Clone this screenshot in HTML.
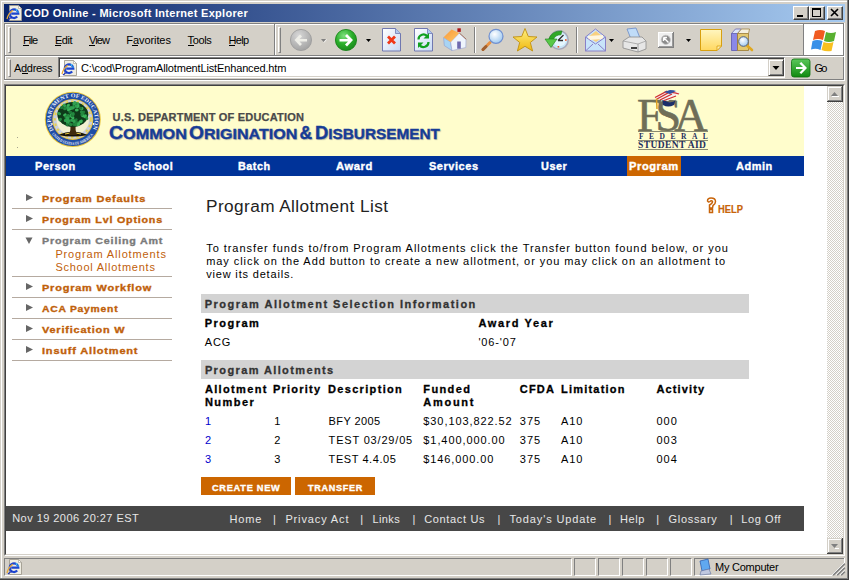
<!DOCTYPE html>
<html><head><meta charset="utf-8">
<style>
*{margin:0;padding:0;box-sizing:border-box}
html,body{width:849px;height:580px;overflow:hidden}
body{position:relative;background:#D4D0C8;font-family:"Liberation Sans",sans-serif;color:#000}
.a{position:absolute}
.t{position:absolute;white-space:nowrap;line-height:1}
.ui{font-size:11px}
.vb{font-weight:bold}
</style></head><body>
<!-- window frame -->
<div class="a" style="left:1px;top:1px;width:846px;height:1px;background:#fff"></div>
<div class="a" style="left:1px;top:1px;width:1px;height:577px;background:#fff"></div>
<div class="a" style="left:847px;top:0;width:1px;height:579px;background:#808080"></div>
<div class="a" style="left:848px;top:0;width:1px;height:580px;background:#404040"></div>
<div class="a" style="left:0;top:578px;width:848px;height:1px;background:#808080"></div>
<div class="a" style="left:0;top:579px;width:849px;height:1px;background:#404040"></div>

<!-- title bar -->
<div class="a" style="left:4px;top:4px;width:841px;height:18px;background:linear-gradient(to right,#0A246A,#A6CAF0)"></div>
<svg class="a" style="left:6px;top:5px" width="16" height="16" viewBox="0 0 16 16">
 <defs><symbol id="ie" viewBox="0 0 16 16">
 <path d="M3.5 0.5 H12.5 L15.5 3.5 V15.5 H3.5z" fill="#EFEDE3" stroke="#A09C90" stroke-width="0.9"/>
 <path d="M12.5 0.5 V3.5 H15.5z" fill="#FFFFFF" stroke="#A09C90" stroke-width="0.6"/>
 <path d="M5.2 8.6 H12.3 A4.3 4.3 0 1 0 11.2 11.6" fill="none" stroke="#1D44CF" stroke-width="2.2"/>
 <path d="M1 14 Q2.2 8.5 6.8 5.2" fill="none" stroke="#E8A838" stroke-width="1.3"/>
 <path d="M2 15 Q4 13 6 12.5" fill="none" stroke="#2030B0" stroke-width="1.2"/>
 <circle cx="10.5" cy="5" r="0.9" fill="#40C8F8"/><circle cx="12" cy="7" r="0.8" fill="#40C8F8"/>
 </symbol></defs>
 <use href="#ie"/>
</svg>
<!-- caption buttons -->
<!--TITLE-->
<div class="a" style="left:793px;top:6px;width:16px;height:14px;background:#D4D0C8;border-top:1px solid #fff;border-left:1px solid #fff;border-right:1px solid #404040;border-bottom:1px solid #404040;box-shadow:inset -1px -1px 0 #808080"></div>
<div class="a" style="left:797px;top:15px;width:6px;height:2px;background:#000"></div>
<div class="a" style="left:809px;top:6px;width:16px;height:14px;background:#D4D0C8;border-top:1px solid #fff;border-left:1px solid #fff;border-right:1px solid #404040;border-bottom:1px solid #404040;box-shadow:inset -1px -1px 0 #808080"></div>
<div class="a" style="left:812px;top:8px;width:9px;height:9px;border:1px solid #000;border-top-width:2px"></div>
<div class="a" style="left:827px;top:6px;width:16px;height:14px;background:#D4D0C8;border-top:1px solid #fff;border-left:1px solid #fff;border-right:1px solid #404040;border-bottom:1px solid #404040;box-shadow:inset -1px -1px 0 #808080"></div>
<svg class="a" style="left:827px;top:6px" width="16" height="14" viewBox="0 0 16 14"><path d="M4 3l7 7M11 3l-7 7" stroke="#000" stroke-width="1.6"/></svg>

<!-- rebar etched lines -->
<div class="a" style="left:4px;top:23px;width:840px;height:1px;background:#808080"></div>
<div class="a" style="left:5px;top:24px;width:839px;height:1px;background:#fff"></div>
<div class="a" style="left:4px;top:23px;width:1px;height:57px;background:#808080"></div>
<div class="a" style="left:5px;top:24px;width:1px;height:56px;background:#fff"></div>
<div class="a" style="left:843px;top:23px;width:1px;height:57px;background:#808080"></div>
<div class="a" style="left:844px;top:23px;width:1px;height:58px;background:#fff"></div>
<div class="a" style="left:4px;top:55px;width:840px;height:1px;background:#808080"></div>
<div class="a" style="left:5px;top:56px;width:839px;height:1px;background:#fff"></div>
<div class="a" style="left:4px;top:79px;width:840px;height:1px;background:#808080"></div>
<div class="a" style="left:4px;top:80px;width:841px;height:1px;background:#fff"></div>
<!-- band separator -->
<div class="a" style="left:274px;top:24px;width:1px;height:31px;background:#808080"></div>
<div class="a" style="left:275px;top:24px;width:1px;height:31px;background:#fff"></div>
<!-- grippers -->
<div class="a" style="left:8px;top:27px;width:3px;height:26px;border-left:1px solid #fff;border-top:1px solid #fff;border-right:1px solid #808080;border-bottom:1px solid #808080"></div>
<div class="a" style="left:278px;top:27px;width:3px;height:26px;border-left:1px solid #fff;border-top:1px solid #fff;border-right:1px solid #808080;border-bottom:1px solid #808080"></div>
<div class="a" style="left:8px;top:59px;width:3px;height:18px;border-left:1px solid #fff;border-top:1px solid #fff;border-right:1px solid #808080;border-bottom:1px solid #808080"></div>

<!-- menu -->
<div class="a" style="left:23px;top:45px;width:6px;height:1px;background:#000"></div>
<div class="a" style="left:55px;top:45px;width:6px;height:1px;background:#000"></div>
<div class="a" style="left:89px;top:45px;width:6px;height:1px;background:#000"></div>
<div class="a" style="left:132px;top:45px;width:6px;height:1px;background:#000"></div>
<div class="a" style="left:188px;top:45px;width:6px;height:1px;background:#000"></div>
<div class="a" style="left:229px;top:45px;width:6px;height:1px;background:#000"></div>
<div class="a" style="left:22px;top:73px;width:6px;height:1px;background:#000"></div>


<!-- throbber -->
<div class="a" style="left:804px;top:24px;width:39px;height:31px;background:#fff"></div>
<div class="a" style="left:803px;top:24px;width:1px;height:31px;background:#808080"></div>

<!-- address bar -->
<div class="a" style="left:58px;top:57px;width:727px;height:21px;background:#fff;border-top:1px solid #808080;border-left:1px solid #808080;border-right:1px solid #fff;border-bottom:1px solid #fff;box-shadow:inset 1px 1px 0 #404040,inset -1px -1px 0 #D4D0C8"></div>
<div class="a" style="left:768px;top:59px;width:16px;height:17px;background:#D4D0C8;border-top:1px solid #D4D0C8;border-left:1px solid #D4D0C8;border-right:1px solid #404040;border-bottom:1px solid #404040;box-shadow:inset 1px 1px 0 #fff,inset -1px -1px 0 #808080"></div>
<svg class="a" style="left:768px;top:59px" width="16" height="17"><path d="M4.5 7h7l-3.5 4z" fill="#000"/></svg>

<!-- content border -->
<div class="a" style="left:4px;top:84px;width:841px;height:472px;border-top:1px solid #808080;border-left:1px solid #808080;border-right:1px solid #fff;border-bottom:1px solid #fff"></div>
<div class="a" style="left:5px;top:85px;width:839px;height:470px;border-top:1px solid #404040;border-left:1px solid #404040;border-right:1px solid #D4D0C8;border-bottom:1px solid #D4D0C8;background:#fff"></div>

<!-- page content placeholder -->
<!-- yellow header -->
<div class="a" style="left:6px;top:86px;width:798px;height:70px;background:#FFFDCC"></div>
<!-- nav bar -->
<div class="a" style="left:6px;top:156px;width:798px;height:20px;background:#003399"></div>
<div class="a" style="left:627px;top:156px;width:54px;height:20px;background:#CC6600"></div>
<!-- left nav lines -->
<div class="a" style="left:12px;top:208px;width:160px;height:1px;background:#b5aaa0"></div>
<div class="a" style="left:12px;top:229px;width:160px;height:1px;background:#b5aaa0"></div>
<div class="a" style="left:12px;top:276px;width:160px;height:1px;background:#b5aaa0"></div>
<div class="a" style="left:12px;top:297px;width:160px;height:1px;background:#b5aaa0"></div>
<div class="a" style="left:12px;top:318px;width:160px;height:1px;background:#b5aaa0"></div>
<div class="a" style="left:12px;top:339px;width:160px;height:1px;background:#b5aaa0"></div>
<div class="a" style="left:12px;top:360px;width:160px;height:1px;background:#b5aaa0"></div>
<!-- arrows -->
<svg class="a" style="left:25px;top:194px" width="9" height="9"><path d="M1 0L8 3.5L1 7z" fill="#666"/></svg>
<svg class="a" style="left:25px;top:215px" width="9" height="9"><path d="M1 0L8 3.5L1 7z" fill="#666"/></svg>
<svg class="a" style="left:25px;top:237px" width="9" height="9"><path d="M0.5 0.5L7.5 0.5L4 7z" fill="#666"/></svg>
<svg class="a" style="left:25px;top:283px" width="9" height="9"><path d="M1 0L8 3.5L1 7z" fill="#666"/></svg>
<svg class="a" style="left:25px;top:304px" width="9" height="9"><path d="M1 0L8 3.5L1 7z" fill="#666"/></svg>
<svg class="a" style="left:25px;top:325px" width="9" height="9"><path d="M1 0L8 3.5L1 7z" fill="#666"/></svg>
<svg class="a" style="left:25px;top:346px" width="9" height="9"><path d="M1 0L8 3.5L1 7z" fill="#666"/></svg>
<!-- bands -->
<div class="a" style="left:201px;top:294px;width:548px;height:19px;background:#D3D3D3"></div>
<div class="a" style="left:201px;top:360px;width:548px;height:19px;background:#D3D3D3"></div>
<!-- buttons -->
<div class="a" style="left:201px;top:477px;width:90px;height:18px;background:#CC6600"></div>
<div class="a" style="left:295px;top:477px;width:80px;height:18px;background:#CC6600"></div>
<!-- footer -->
<div class="a" style="left:6px;top:506px;width:798px;height:25px;background:#474747"></div>
<div class="a" style="left:17px;top:137px;width:1px;height:1px;background:#A8A490"></div>
<div class="a" style="left:17px;top:147px;width:1px;height:1px;background:#A8A490"></div>

<!-- seal -->
<svg class="a" style="left:44px;top:91px" width="58" height="57" viewBox="0 0 58 57">
 <defs>
  <path id="arcT" d="M9.75 39.4A22 22 0 1 1 47.85 39.4"/>
  <path id="arcB" d="M7.9 43A25.5 25.5 0 0 0 49.7 43"/>
 </defs>
 <ellipse cx="28.8" cy="28.4" rx="28" ry="27.6" fill="#E6C23A"/>
 <ellipse cx="28.8" cy="28.4" rx="27" ry="26.6" fill="#1F4DA6"/>
 <text font-family="Liberation Serif" font-size="5.6" font-weight="bold" fill="#E8ECF8"><textPath href="#arcT" textLength="90" lengthAdjust="spacingAndGlyphs">DEPARTMENT OF EDUCATION</textPath></text>
 <text font-family="Liberation Serif" font-size="4.2" font-weight="bold" fill="#E8ECF8"><textPath href="#arcB" textLength="48" lengthAdjust="spacingAndGlyphs">UNITED STATES OF AMERICA</textPath></text>
 <circle cx="8" cy="33" r="0.9" fill="#fff"/><circle cx="49.6" cy="33" r="0.9" fill="#fff"/>
 <circle cx="28.8" cy="28.4" r="20.5" fill="#E6C23A"/>
 <circle cx="28.8" cy="28.4" r="19.6" fill="#C9CFDF"/>
 <circle cx="28.8" cy="28.4" r="18" fill="none" stroke="#E8D050" stroke-width="2" stroke-dasharray="2.5 3"/>
 <circle cx="28.8" cy="28.4" r="16.2" fill="#F3F0D2"/>
 <path d="M14 44 Q29 37 44 44 Q29 47 14 44z" fill="#161208"/>
 <path d="M21 43 Q29 40 37 43" stroke="#E8C840" stroke-width="1" fill="none"/>
 <path d="M25 44 Q27 38 26.5 34 Q24 30 19 29 L21 27.5 Q26 29 28.5 32 Q31 28 36 27 L37 28.5 Q32 30 31.5 34 Q31 39 33 44z" fill="#3E2A0E"/>
 <ellipse cx="28.8" cy="23.5" rx="15.5" ry="12.5" fill="#0E3A1A"/>
 <ellipse cx="20.9" cy="24.0" rx="1.9" ry="1.5" fill="#3AB25A" transform="rotate(154 20.9 24.0)"/><ellipse cx="28.0" cy="24.9" rx="1.9" ry="1.5" fill="#2FA050" transform="rotate(120 28.0 24.9)"/><ellipse cx="21.6" cy="16.9" rx="1.9" ry="1.5" fill="#1E7A38" transform="rotate(138 21.6 16.9)"/><ellipse cx="38.9" cy="22.5" rx="1.9" ry="1.5" fill="#23893F" transform="rotate(59 38.9 22.5)"/><ellipse cx="32.8" cy="31.5" rx="1.9" ry="1.5" fill="#1E7A38" transform="rotate(3 32.8 31.5)"/><ellipse cx="33.9" cy="13.0" rx="1.9" ry="1.5" fill="#2FA050" transform="rotate(77 33.9 13.0)"/><ellipse cx="37.2" cy="30.4" rx="1.9" ry="1.5" fill="#3AB25A" transform="rotate(121 37.2 30.4)"/><ellipse cx="31.6" cy="32.7" rx="1.9" ry="1.5" fill="#1E7A38" transform="rotate(109 31.6 32.7)"/><ellipse cx="25.6" cy="29.9" rx="1.9" ry="1.5" fill="#1E7A38" transform="rotate(34 25.6 29.9)"/><ellipse cx="17.9" cy="16.5" rx="1.9" ry="1.5" fill="#1E7A38" transform="rotate(160 17.9 16.5)"/><ellipse cx="39.5" cy="21.2" rx="1.9" ry="1.5" fill="#1E7A38" transform="rotate(146 39.5 21.2)"/><ellipse cx="24.3" cy="25.0" rx="1.9" ry="1.5" fill="#23893F" transform="rotate(86 24.3 25.0)"/><ellipse cx="34.3" cy="32.9" rx="1.9" ry="1.5" fill="#3AB25A" transform="rotate(155 34.3 32.9)"/><ellipse cx="33.9" cy="15.3" rx="1.9" ry="1.5" fill="#3AB25A" transform="rotate(138 33.9 15.3)"/><ellipse cx="40.9" cy="24.6" rx="1.9" ry="1.5" fill="#23893F" transform="rotate(162 40.9 24.6)"/><ellipse cx="38.7" cy="24.7" rx="1.9" ry="1.5" fill="#3AB25A" transform="rotate(31 38.7 24.7)"/><ellipse cx="37.8" cy="20.9" rx="1.9" ry="1.5" fill="#23893F" transform="rotate(5 37.8 20.9)"/><ellipse cx="22.6" cy="29.2" rx="1.9" ry="1.5" fill="#2FA050" transform="rotate(11 22.6 29.2)"/><ellipse cx="31.9" cy="29.0" rx="1.9" ry="1.5" fill="#1E7A38" transform="rotate(150 31.9 29.0)"/><ellipse cx="23.7" cy="31.8" rx="1.9" ry="1.5" fill="#3AB25A" transform="rotate(129 23.7 31.8)"/><ellipse cx="29.9" cy="33.3" rx="1.9" ry="1.5" fill="#1E7A38" transform="rotate(74 29.9 33.3)"/><ellipse cx="32.1" cy="15.1" rx="1.9" ry="1.5" fill="#2FA050" transform="rotate(86 32.1 15.1)"/><ellipse cx="23.2" cy="33.5" rx="1.9" ry="1.5" fill="#1E7A38" transform="rotate(96 23.2 33.5)"/><ellipse cx="27.6" cy="23.5" rx="1.9" ry="1.5" fill="#2FA050" transform="rotate(158 27.6 23.5)"/><ellipse cx="21.9" cy="26.1" rx="1.9" ry="1.5" fill="#23893F" transform="rotate(77 21.9 26.1)"/><ellipse cx="26.9" cy="17.4" rx="1.9" ry="1.5" fill="#3AB25A" transform="rotate(140 26.9 17.4)"/><ellipse cx="24.0" cy="29.6" rx="1.9" ry="1.5" fill="#3AB25A" transform="rotate(5 24.0 29.6)"/><ellipse cx="25.1" cy="25.1" rx="1.9" ry="1.5" fill="#23893F" transform="rotate(15 25.1 25.1)"/><ellipse cx="32.8" cy="19.1" rx="1.9" ry="1.5" fill="#3AB25A" transform="rotate(173 32.8 19.1)"/><ellipse cx="41.3" cy="25.5" rx="1.9" ry="1.5" fill="#3AB25A" transform="rotate(125 41.3 25.5)"/><ellipse cx="34.1" cy="33.7" rx="1.9" ry="1.5" fill="#3AB25A" transform="rotate(160 34.1 33.7)"/><ellipse cx="27.5" cy="25.1" rx="1.9" ry="1.5" fill="#3AB25A" transform="rotate(45 27.5 25.1)"/><ellipse cx="24.7" cy="18.7" rx="1.9" ry="1.5" fill="#3AB25A" transform="rotate(152 24.7 18.7)"/><ellipse cx="21.7" cy="29.6" rx="1.9" ry="1.5" fill="#2FA050" transform="rotate(6 21.7 29.6)"/><ellipse cx="42.9" cy="27.2" rx="1.9" ry="1.5" fill="#23893F" transform="rotate(79 42.9 27.2)"/><ellipse cx="28.8" cy="26.5" rx="1.9" ry="1.5" fill="#3AB25A" transform="rotate(61 28.8 26.5)"/><ellipse cx="23.6" cy="27.1" rx="1.9" ry="1.5" fill="#2FA050" transform="rotate(26 23.6 27.1)"/><ellipse cx="31.8" cy="33.3" rx="1.9" ry="1.5" fill="#23893F" transform="rotate(112 31.8 33.3)"/><ellipse cx="16.2" cy="28.6" rx="1.9" ry="1.5" fill="#23893F" transform="rotate(145 16.2 28.6)"/><ellipse cx="27.3" cy="16.7" rx="1.9" ry="1.5" fill="#2FA050" transform="rotate(8 27.3 16.7)"/><ellipse cx="29.7" cy="15.9" rx="1.9" ry="1.5" fill="#23893F" transform="rotate(71 29.7 15.9)"/><ellipse cx="24.0" cy="30.5" rx="1.9" ry="1.5" fill="#2FA050" transform="rotate(158 24.0 30.5)"/><ellipse cx="24.2" cy="14.5" rx="1.9" ry="1.5" fill="#3AB25A" transform="rotate(132 24.2 14.5)"/><ellipse cx="37.6" cy="17.7" rx="1.9" ry="1.5" fill="#3AB25A" transform="rotate(162 37.6 17.7)"/><ellipse cx="26.3" cy="21.2" rx="1.9" ry="1.5" fill="#1E7A38" transform="rotate(9 26.3 21.2)"/><ellipse cx="26.8" cy="33.4" rx="1.9" ry="1.5" fill="#23893F" transform="rotate(8 26.8 33.4)"/><ellipse cx="36.2" cy="30.7" rx="1.9" ry="1.5" fill="#3AB25A" transform="rotate(139 36.2 30.7)"/><ellipse cx="24.0" cy="16.7" rx="1.9" ry="1.5" fill="#2FA050" transform="rotate(150 24.0 16.7)"/><ellipse cx="37.9" cy="23.3" rx="1.9" ry="1.5" fill="#23893F" transform="rotate(110 37.9 23.3)"/><ellipse cx="31.1" cy="11.8" rx="1.9" ry="1.5" fill="#2FA050" transform="rotate(43 31.1 11.8)"/><ellipse cx="28.9" cy="17.0" rx="1.9" ry="1.5" fill="#2FA050" transform="rotate(134 28.9 17.0)"/><ellipse cx="29.9" cy="12.7" rx="1.9" ry="1.5" fill="#2FA050" transform="rotate(87 29.9 12.7)"/><ellipse cx="30.0" cy="30.2" rx="1.9" ry="1.5" fill="#2FA050" transform="rotate(90 30.0 30.2)"/><ellipse cx="20.4" cy="14.3" rx="1.9" ry="1.5" fill="#2FA050" transform="rotate(43 20.4 14.3)"/><ellipse cx="21.0" cy="17.8" rx="1.9" ry="1.5" fill="#23893F" transform="rotate(1 21.0 17.8)"/><ellipse cx="28.4" cy="24.6" rx="1.9" ry="1.5" fill="#1E7A38" transform="rotate(12 28.4 24.6)"/><ellipse cx="36.5" cy="17.2" rx="1.9" ry="1.5" fill="#1E7A38" transform="rotate(13 36.5 17.2)"/><ellipse cx="28.0" cy="29.4" rx="1.9" ry="1.5" fill="#2FA050" transform="rotate(14 28.0 29.4)"/><ellipse cx="15.3" cy="22.6" rx="1.9" ry="1.5" fill="#2FA050" transform="rotate(22 15.3 22.6)"/><ellipse cx="29.3" cy="22.8" rx="1.9" ry="1.5" fill="#23893F" transform="rotate(80 29.3 22.8)"/>
</svg>
<!-- COD heading -->
<div class="t" style="left:108.5px;top:125px;font-weight:700;color:#173C96;-webkit-text-stroke:0.35px #173C96;text-shadow:1px 1px 1px rgba(40,40,90,.35);transform:scaleX(1.11);transform-origin:0 0"><span style="font-size:17.5px">C</span><span style="font-size:14.6px">OMMON</span></div>
<div class="t" style="left:189px;top:125px;font-weight:700;color:#173C96;-webkit-text-stroke:0.35px #173C96;text-shadow:1px 1px 1px rgba(40,40,90,.35);transform:scaleX(1.10);transform-origin:0 0"><span style="font-size:17.5px">O</span><span style="font-size:14.6px">RIGINATION</span></div>
<div class="t" style="left:299.5px;top:125px;font-weight:700;color:#173C96;-webkit-text-stroke:0.35px #173C96;text-shadow:1px 1px 1px rgba(40,40,90,.35);transform:scaleX(1.0);transform-origin:0 0"><span style="font-size:17.5px">&amp;</span><span style="font-size:14.6px"></span></div>
<div class="t" style="left:314.5px;top:125px;font-weight:700;color:#173C96;-webkit-text-stroke:0.35px #173C96;text-shadow:1px 1px 1px rgba(40,40,90,.35);transform:scaleX(1.051);transform-origin:0 0"><span style="font-size:17.5px">D</span><span style="font-size:14.6px">ISBURSEMENT</span></div>
<!-- FSA logo -->
<div class="t" style="left:637px;top:93px;font-family:'Liberation Serif',serif;font-size:46px;color:#6F6E58;letter-spacing:-7px;-webkit-text-stroke:0.6px #6F6E58;line-height:1">FSA</div>
<div class="a" style="left:638px;top:131px;width:70px;height:1px;background:#8A8A70"></div>
<div class="t" style="left:639px;top:133px;font-family:'Liberation Serif',serif;font-size:7.5px;font-weight:700;color:#1F2F5E;letter-spacing:5.5px">FEDERAL</div>
<div class="a" style="left:638px;top:140px;width:70px;height:1px;background:#8A8A70"></div>
<div class="t" style="left:638px;top:141px;font-family:'Liberation Serif',serif;font-size:9.5px;font-weight:700;color:#1F2F5E;letter-spacing:0.4px">STUDENT AID</div>
<div class="a" style="left:638px;top:149px;width:70px;height:1px;background:#8A8A70"></div>
<svg class="a" style="left:652px;top:89px" width="30" height="24" viewBox="0 0 30 24">
 <path d="M10 9 Q14 14 20 13 Q24 12 24 9 L22 16 Q16 19 11 16z" fill="#1B2F6A"/>
 <path d="M2 9 L14 2 Q20 0 28 4 L16 12 Q8 11 2 9z" fill="#F4F0F0"/>
 <path d="M3 8.5 L15 2.2 M5 10 L17 3.5 Q22 3 27 5 M8 11 L20 5 M12 11.5 L24 7" stroke="#D23030" stroke-width="1.3" fill="none"/>
 <path d="M12 3 L18 1 Q22 1 24 2 L18 5z" fill="#2E4FA0"/>
 <path d="M4.5 9.5 L5 20" stroke="#E0A020" stroke-width="1.5"/>
</svg>
<!-- HELP -->
<svg class="a" style="left:706px;top:197px" width="11" height="17" viewBox="0 0 11 17">
 <path d="M1.5 4 Q1.5 1 5 1 Q9.5 1 9.5 4.5 Q9.5 7 7 8.5 L6.5 11 L3.5 11 L3.5 8 Q6.5 6.5 6.5 4.5 Q6 3.5 4.5 4 Q4 5 2.5 5z M3.5 12.5 H6.5 V15.5 H3.5z" fill="none" stroke="#C8640A" stroke-width="1.5"/>
</svg>
<div class="t" style="left:718px;top:204px;font-size:11px;font-weight:700;color:#C8640A;letter-spacing:0px;-webkit-text-stroke:0.2px;transform:scaleX(0.85);transform-origin:0 0">HELP</div>


<!-- scrollbar -->
<div class="a" style="left:827px;top:86px;width:16px;height:468px;background-color:#fff;background-image:conic-gradient(#D4D0C8 25%,#fff 0 50%,#D4D0C8 0 75%,#fff 0);background-size:2px 2px"></div>

<!-- status bar -->
<svg class="a" style="left:0;top:0" width="849" height="580" viewBox="0 0 849 580">
 <defs>
  <radialGradient id="gGray" cx="0.4" cy="0.3" r="0.8"><stop offset="0" stop-color="#D8D8D8"/><stop offset="1" stop-color="#9C9C9C"/></radialGradient>
  <radialGradient id="gGreen" cx="0.4" cy="0.3" r="0.8"><stop offset="0" stop-color="#7EE07E"/><stop offset="0.5" stop-color="#2AAE2A"/><stop offset="1" stop-color="#17801A"/></radialGradient>
  <linearGradient id="gPage" x1="0" y1="0" x2="1" y2="1"><stop offset="0" stop-color="#FFFFFF"/><stop offset="1" stop-color="#C8DAF5"/></linearGradient>
  <linearGradient id="gNote" x1="0" y1="0" x2="0" y2="1"><stop offset="0" stop-color="#FFF6C0"/><stop offset="1" stop-color="#FFD860"/></linearGradient>
  <linearGradient id="gStar" x1="0" y1="0" x2="0" y2="1"><stop offset="0" stop-color="#FFF080"/><stop offset="1" stop-color="#F0B810"/></linearGradient>
  <radialGradient id="gLens" cx="0.4" cy="0.35" r="0.7"><stop offset="0" stop-color="#FFFFFF"/><stop offset="1" stop-color="#9CC8F0"/></radialGradient>
  <linearGradient id="gGo" x1="0" y1="0" x2="0" y2="1"><stop offset="0" stop-color="#5CC85C"/><stop offset="1" stop-color="#108A10"/></linearGradient>
 </defs>
 <!-- back -->
 <circle cx="301" cy="40" r="10.6" fill="url(#gGray)" stroke="#9A9A9A" stroke-width="0.8"/>
 <path d="M294.5 40 L300 34.5 L302 36.5 L299.5 39 L307 39 L307 41.5 L299.5 41.5 L302 44 L300 46z" fill="#EEEEE8"/>
 <path d="M321 39 h5 l-2.5 3z" fill="#808080"/><path d="M324 42.5 l2.5 -3" stroke="#fff" stroke-width="0.8"/>
 <!-- forward -->
 <circle cx="346" cy="40" r="10.6" fill="url(#gGreen)" stroke="#158015" stroke-width="0.8"/>
 <path d="M353 40 L347 34 L345 36 L348 39 L339.5 39 L339.5 41.5 L348 41.5 L345 44.5 L347 46.5z" fill="#fff"/>
 <path d="M366 39 h5 l-2.5 3z" fill="#000"/>
 <!-- stop -->
 <path d="M382.5 28.5 h13 l5 5 v17.5 h-18z" fill="url(#gPage)" stroke="#7078B0" stroke-width="1"/>
 <path d="M395.5 28.5 v5 h5" fill="#B0C8EE" stroke="#7078B0" stroke-width="0.8"/>
 <path d="M388 36.5 l7 7 M395 36.5 l-7 7" stroke="#F03818" stroke-width="2.8"/>
 <!-- refresh -->
 <path d="M414.5 28.5 h13 l5 5 v17.5 h-18z" fill="url(#gPage)" stroke="#7078B0" stroke-width="1"/>
 <path d="M427.5 28.5 v5 h5" fill="#B0C8EE" stroke="#7078B0" stroke-width="0.8"/>
 <path d="M418.5 39.5 a5 5 0 0 1 9 -3" stroke="#10A020" stroke-width="2.2" fill="none"/>
 <path d="M429 33 v5.5 h-5.5z" fill="#10A020"/>
 <path d="M428.5 42 a5 5 0 0 1 -9 3" stroke="#10A020" stroke-width="2.2" fill="none"/>
 <path d="M418 48 v-5.5 h5.5z" fill="#10A020"/>
 <!-- home -->
 <linearGradient id="gRoof" x1="0" y1="0" x2="1" y2="1"><stop offset="0" stop-color="#F89838"/><stop offset="1" stop-color="#FFC868"/></linearGradient>
 <path d="M443.6 37.5 L450.6 42 L452 50.6 L444.3 45.6z" fill="#A8D4F4" stroke="#8A9AD0" stroke-width="0.6"/>
 <path d="M450.6 42 L459.3 33 L466 39.5 L465.8 47.5 L452 50.6z" fill="#EEF4FC" stroke="#9AA4D0" stroke-width="0.6"/>
 <rect x="457.4" y="28.3" width="3.4" height="3.6" fill="#B01818"/>
 <path d="M443.6 37.2 L451.6 29.4 L459.3 33 L450.6 42z" fill="url(#gRoof)"/>
 <path d="M459.3 33 L466.3 39.3" stroke="#A06040" stroke-width="0.8"/>
 <rect x="457.2" y="41.5" width="3.6" height="7.2" fill="#6E6AB0"/>
 <!-- separator -->
 <rect x="474" y="27" width="1" height="26" fill="#808080"/><rect x="475" y="27" width="1" height="26" fill="#fff"/>
 <!-- search -->
 <path d="M483 49.5 L490 42.5" stroke="#E89040" stroke-width="3" stroke-linecap="round"/>
 <path d="M483 49.5 L486 46.5" stroke="#A06030" stroke-width="3" stroke-linecap="round"/>
 <circle cx="496" cy="36.3" r="7" fill="url(#gLens)" stroke="#7090D0" stroke-width="1.2"/>
 <!-- star -->
 <path d="M525 28.5 L528.3 36.5 L537 37 L530.3 42.5 L532.6 51 L525 46.3 L517.4 51 L519.7 42.5 L513 37 L521.7 36.5z" fill="url(#gStar)" stroke="#C09010" stroke-width="0.9" stroke-linejoin="round"/>
 <!-- history -->
 <circle cx="559" cy="40" r="9.2" fill="#C8E6F8" stroke="#A8A8B8" stroke-width="1.6"/>
 <circle cx="559.5" cy="39.5" r="6.8" fill="#E4F6FE"/>
 <path d="M558 40.5 L563.5 35 M558 40.5 H563" stroke="#303030" stroke-width="1.3"/>
 <rect x="565" y="39.2" width="1.6" height="1.6" fill="#F05020"/><rect x="557.6" y="46" width="1.6" height="1.6" fill="#F05020"/>
 <path d="M562 31 Q551.5 30.5 548.5 39.5 L553.5 39.5 Q555 35 561 34.8 z" fill="#30A828" stroke="#1E801E" stroke-width="0.6"/>
 <path d="M545 39 L557 39 L551 47.5 z" fill="#58C848" stroke="#1E801E" stroke-width="0.6" stroke-linejoin="round"/>
 <!-- separator -->
 <rect x="576" y="27" width="1" height="26" fill="#808080"/><rect x="577" y="27" width="1" height="26" fill="#fff"/>
 <!-- mail -->
 <path d="M585.5 37 L595.5 29 L605.5 37 V51 H585.5z" fill="#C8E4FA" stroke="#8880C8" stroke-width="1"/>
 <path d="M588 37 L596 31 L603 37 L596 42z" fill="#F8D080"/>
 <path d="M588 36 L603 35 L603 39 L588 40z" fill="#FFF6E0"/>
 <path d="M585.5 37 L595.5 44 L605.5 37 M585.5 51 L593 44 M605.5 51 L598 44" fill="none" stroke="#8880C8" stroke-width="1"/>
 <path d="M609 39 h5 l-2.5 3z" fill="#000"/>
 <!-- print -->
 <path d="M627 29 L636 28 L640 38 L631 39z" fill="#C0DCF8" stroke="#6A8AC8" stroke-width="0.8"/>
 <path d="M623 41 L629 37 L642 37 L646 41 V49 L638 52 L623 48z" fill="#E6E6E6" stroke="#8A8A8A" stroke-width="0.8"/>
 <path d="M623 41 L638 44 L646 41" fill="none" stroke="#A0A0A0" stroke-width="0.8"/>
 <path d="M638 44 V52" stroke="#909090" stroke-width="0.8"/>
 <rect x="631" y="47" width="6" height="2" fill="#404040"/>
 <!-- edit -->
 <rect x="658" y="32" width="16" height="16" fill="#808080"/>
 <rect x="658" y="32" width="15" height="15" fill="#FFFFFF"/>
 <rect x="659" y="33" width="14" height="14" fill="#9A9A9A"/>
 <rect x="659" y="33" width="13" height="13" fill="#F0F0F0"/>
 <circle cx="665.8" cy="39.8" r="4.6" fill="#8C8C8C" stroke="#C8C8C8" stroke-width="0.8"/>
 <path d="M663.5 37.5 L668.5 42.5 M663.5 37.5 v3.5 M663.5 37.5 h3.5" stroke="#fff" stroke-width="1.4"/>
 <path d="M686 39 h5 l-2.5 3z" fill="#000"/>
 <!-- note -->
 <path d="M700.5 29.5 H721.5 V46 L717 50.5 H700.5z" fill="url(#gNote)" stroke="#D8A010" stroke-width="1"/>
 <path d="M717 50.5 V46 H721.5z" fill="#FFF0B0" stroke="#D8A010" stroke-width="0.8"/>
 <!-- research -->
 <path d="M731.5 33.5 H737.5 V50.5 H731.5z" fill="#8A88E8" stroke="#5A58B0" stroke-width="0.8"/>
 <path d="M731.5 33.5 L735.5 29 H741.5 L737.5 33.5z" fill="#DCE6F8" stroke="#5A58B0" stroke-width="0.7"/>
 <path d="M737.5 33.5 H748.5 V50.5 H737.5z" fill="#E2C870" stroke="#9A7A30" stroke-width="0.8"/>
 <path d="M737.5 33.5 L741.5 29 H749.5 L748.5 33.5z" fill="#F4F0E0" stroke="#9A7A30" stroke-width="0.7"/>
 <path d="M747 45.5 L752 50" stroke="#E0A820" stroke-width="2.6" stroke-linecap="round"/>
 <circle cx="743.5" cy="41.5" r="4.8" fill="url(#gLens)" stroke="#506080" stroke-width="1"/>
 <!-- windows logo -->
 <path d="M815 31 Q820 29 825 31 L823 40 Q818 38 813 40z" fill="#F05A20"/>
 <path d="M826 32 Q831 34 836 32 L834 41 Q829 43 824 41z" fill="#58B030"/>
 <path d="M812.5 41 Q817 39 822.5 41 L820.5 50 Q816 48 811 49.5z" fill="#3890E8"/>
 <path d="M823.5 42 Q829 44 833.5 42 L831.5 51 Q826 52 821.5 50z" fill="#F8C020"/>
 <!-- address IE icon -->
 <use href="#ie" x="61" y="60" width="16" height="16"/>
 <!-- Go icon -->
 <rect x="791.5" y="59" width="18.5" height="18" rx="2.5" fill="url(#gGo)" stroke="#0E700E" stroke-width="0.8"/>
 <path d="M796 67 H803 L799.5 63.5 L801.2 62 L807 68 L801.2 74 L799.5 72.5 L803 69 H796z" fill="#fff"/>
 <!-- scrollbar buttons -->
 <rect x="827" y="86" width="16" height="16" fill="#D4D0C8"/>
 <path d="M827 86 H843 V102 H827z" fill="none"/>
 <rect x="827" y="86" width="15" height="1" fill="#D4D0C8"/><rect x="827" y="86" width="1" height="15" fill="#D4D0C8"/>
 <rect x="828" y="87" width="13" height="1" fill="#fff"/><rect x="828" y="87" width="1" height="13" fill="#fff"/>
 <rect x="828" y="100" width="14" height="1" fill="#808080"/><rect x="841" y="87" width="1" height="14" fill="#808080"/>
 <rect x="827" y="101" width="16" height="1" fill="#404040"/><rect x="842" y="86" width="1" height="16" fill="#404040"/>
 <path d="M831 96 L834.5 92 L838 96z" fill="#808080"/><rect x="832" y="96" width="7" height="1" fill="#fff"/>
 <rect x="827" y="538" width="16" height="16" fill="#D4D0C8"/>
 <rect x="828" y="539" width="13" height="1" fill="#fff"/><rect x="828" y="539" width="1" height="13" fill="#fff"/>
 <rect x="828" y="552" width="14" height="1" fill="#808080"/><rect x="841" y="539" width="1" height="14" fill="#808080"/>
 <rect x="827" y="553" width="16" height="1" fill="#404040"/><rect x="842" y="538" width="1" height="16" fill="#404040"/>
 <path d="M831 544 L838 544 L834.5 548z" fill="#808080"/><rect x="835" y="548" width="4" height="1" fill="#fff"/>
</svg>
<!-- status bar panels -->
<div class="a" style="left:4px;top:558px;width:568px;height:18px;border-top:1px solid #808080;border-left:1px solid #808080;border-right:1px solid #fff;border-bottom:1px solid #fff"></div>
<div class="a" style="left:574px;top:558px;width:22px;height:18px;border-top:1px solid #808080;border-left:1px solid #808080;border-right:1px solid #fff;border-bottom:1px solid #fff"></div>
<div class="a" style="left:598px;top:558px;width:22px;height:18px;border-top:1px solid #808080;border-left:1px solid #808080;border-right:1px solid #fff;border-bottom:1px solid #fff"></div>
<div class="a" style="left:622px;top:558px;width:22px;height:18px;border-top:1px solid #808080;border-left:1px solid #808080;border-right:1px solid #fff;border-bottom:1px solid #fff"></div>
<div class="a" style="left:646px;top:558px;width:22px;height:18px;border-top:1px solid #808080;border-left:1px solid #808080;border-right:1px solid #fff;border-bottom:1px solid #fff"></div>
<div class="a" style="left:670px;top:558px;width:22px;height:18px;border-top:1px solid #808080;border-left:1px solid #808080;border-right:1px solid #fff;border-bottom:1px solid #fff"></div>
<div class="a" style="left:694px;top:558px;width:151px;height:18px;border-top:1px solid #808080;border-left:1px solid #808080;border-right:1px solid #fff;border-bottom:1px solid #fff"></div>
<svg class="a" style="left:0;top:556px" width="849" height="24" viewBox="0 556 849 24">
 <!-- IE status icon -->
 <use href="#ie" x="6" y="559" width="16" height="16"/>
 <!-- My computer icon -->
 <path d="M700 561 L708 559 L710 569 L702 571z" fill="#60A8F0" stroke="#3060B0" stroke-width="0.8"/>
 <path d="M701 571 L709 569 L711 574 L700 575z" fill="#C0C8E0" stroke="#6070A0" stroke-width="0.6"/>
 <!-- size grip -->
 <rect x="830" y="557" width="15" height="19" fill="#D4D0C8"/>
 <path d="M832 575 L844.5 562.5" stroke="#fff" stroke-width="1"/>
 <path d="M833.2 575.3 L844.8 563.7" stroke="#808080" stroke-width="1.6"/>
 <path d="M836 575 L844.5 566.5" stroke="#fff" stroke-width="1"/>
 <path d="M837.2 575.3 L844.8 567.7" stroke="#808080" stroke-width="1.6"/>
 <path d="M840 575 L844.5 570.5" stroke="#fff" stroke-width="1"/>
 <path d="M841.2 575.3 L844.8 571.7" stroke="#808080" stroke-width="1.6"/>
 <rect x="844" y="558" width="1" height="5" fill="#fff"/>
 <rect x="826" y="575" width="6" height="1" fill="#fff"/>
 <rect x="830" y="558" width="14" height="1" fill="#808080"/>
</svg>

<div class="t" style="left:24.00px;top:8px;font-size:11px;font-weight:700;color:#fff;letter-spacing:0.300px;">COD Online - Microsoft Internet Explorer</div>
<div class="t" style="left:23.00px;top:35px;font-size:11px;font-weight:400;color:#000;letter-spacing:-0.869px;">File</div>
<div class="t" style="left:55.00px;top:35px;font-size:11px;font-weight:400;color:#000;letter-spacing:-0.499px;">Edit</div>
<div class="t" style="left:89.00px;top:35px;font-size:11px;font-weight:400;color:#000;letter-spacing:-0.900px;">View</div>
<div class="t" style="left:126.30px;top:35px;font-size:11px;font-weight:400;color:#000;letter-spacing:-0.079px;">Favorites</div>
<div class="t" style="left:187.60px;top:35px;font-size:11px;font-weight:400;color:#000;letter-spacing:-0.370px;">Tools</div>
<div class="t" style="left:228.50px;top:35px;font-size:11px;font-weight:400;color:#000;letter-spacing:-0.635px;">Help</div>
<div class="t" style="left:14.00px;top:63px;font-size:11px;font-weight:400;color:#000;letter-spacing:-0.309px;">Address</div>
<div class="t" style="left:81.00px;top:63px;font-size:11px;font-weight:400;color:#000;letter-spacing:-0.147px;">C:\cod\ProgramAllotmentListEnhanced.htm</div>
<div class="t" style="left:814.50px;top:63px;font-size:11px;font-weight:400;color:#000;letter-spacing:-1.756px;">Go</div>
<div class="t" style="left:112.60px;top:112px;font-size:11px;font-weight:700;color:#4a4a4a;letter-spacing:0.199px;-webkit-text-stroke:0.25px;">U.S. DEPARTMENT OF EDUCATION</div>
<div class="t" style="left:34.70px;top:162px;font-size:10px;font-weight:700;color:#fff;letter-spacing:0.5px;transform:scaleX(1.1049);transform-origin:0 0;-webkit-text-stroke:0.35px;">Person</div>
<div class="t" style="left:134.40px;top:162px;font-size:10px;font-weight:700;color:#fff;letter-spacing:0.5px;transform:scaleX(1.0789);transform-origin:0 0;-webkit-text-stroke:0.35px;">School</div>
<div class="t" style="left:237.60px;top:162px;font-size:10px;font-weight:700;color:#fff;letter-spacing:0.5px;transform:scaleX(1.0784);transform-origin:0 0;-webkit-text-stroke:0.35px;">Batch</div>
<div class="t" style="left:335.60px;top:162px;font-size:10px;font-weight:700;color:#fff;letter-spacing:0.5px;transform:scaleX(1.1217);transform-origin:0 0;-webkit-text-stroke:0.35px;">Award</div>
<div class="t" style="left:428.80px;top:162px;font-size:10px;font-weight:700;color:#fff;letter-spacing:0.5px;transform:scaleX(1.0979);transform-origin:0 0;-webkit-text-stroke:0.35px;">Services</div>
<div class="t" style="left:540.50px;top:162px;font-size:10px;font-weight:700;color:#fff;letter-spacing:0.5px;transform:scaleX(1.0862);transform-origin:0 0;-webkit-text-stroke:0.35px;">User</div>
<div class="t" style="left:629.30px;top:162px;font-size:10px;font-weight:700;color:#fff;letter-spacing:0.5px;transform:scaleX(1.1146);transform-origin:0 0;-webkit-text-stroke:0.35px;">Program</div>
<div class="t" style="left:735.60px;top:162px;font-size:10px;font-weight:700;color:#fff;letter-spacing:0.5px;transform:scaleX(1.0970);transform-origin:0 0;-webkit-text-stroke:0.35px;">Admin</div>
<div class="t" style="left:41.50px;top:194px;font-size:9.5px;font-weight:700;color:#C0600A;letter-spacing:0.7px;transform:scaleX(1.1510);transform-origin:0 0;-webkit-text-stroke:0.35px;">Program Defaults</div>
<div class="t" style="left:41.50px;top:215px;font-size:9.5px;font-weight:700;color:#C0600A;letter-spacing:0.7px;transform:scaleX(1.1273);transform-origin:0 0;-webkit-text-stroke:0.35px;">Program Lvl Options</div>
<div class="t" style="left:41.50px;top:236px;font-size:9.5px;font-weight:700;color:#7a7a7a;letter-spacing:0.7px;transform:scaleX(1.1277);transform-origin:0 0;-webkit-text-stroke:0.35px;">Program Ceiling Amt</div>
<div class="t" style="left:41.50px;top:283px;font-size:9.5px;font-weight:700;color:#C0600A;letter-spacing:0.7px;transform:scaleX(1.1521);transform-origin:0 0;-webkit-text-stroke:0.35px;">Program Workflow</div>
<div class="t" style="left:41.50px;top:304px;font-size:9.5px;font-weight:700;color:#C0600A;letter-spacing:0.7px;transform:scaleX(1.0883);transform-origin:0 0;-webkit-text-stroke:0.35px;">ACA Payment</div>
<div class="t" style="left:41.50px;top:325px;font-size:9.5px;font-weight:700;color:#C0600A;letter-spacing:0.7px;transform:scaleX(1.1494);transform-origin:0 0;-webkit-text-stroke:0.35px;">Verification W</div>
<div class="t" style="left:41.50px;top:346px;font-size:9.5px;font-weight:700;color:#C0600A;letter-spacing:0.7px;transform:scaleX(1.1586);transform-origin:0 0;-webkit-text-stroke:0.35px;">Insuff Allotment</div>
<div class="t" style="left:55.40px;top:249px;font-size:11px;font-weight:400;color:#C0600A;letter-spacing:0.854px;">Program Allotments</div>
<div class="t" style="left:55.40px;top:262px;font-size:11px;font-weight:400;color:#C0600A;letter-spacing:0.754px;">School Allotments</div>
<div class="t" style="left:206.23px;top:199px;font-size:16px;font-weight:400;color:#222;letter-spacing:0.4px;transform:scaleX(1.0749);transform-origin:0 0;">Program Allotment List</div>
<div class="t" style="left:206.20px;top:243px;font-size:11px;font-weight:400;color:#000;letter-spacing:0.956px;">To transfer funds to/from Program Allotments click the Transfer button found below, or you</div>
<div class="t" style="left:206.20px;top:256px;font-size:11px;font-weight:400;color:#000;letter-spacing:0.933px;">may click on the Add button to create a new allotment, or you may click on an allotment to</div>
<div class="t" style="left:206.20px;top:269px;font-size:11px;font-weight:400;color:#000;letter-spacing:0.824px;">view its details.</div>
<div class="t" style="left:204.70px;top:299px;font-size:11px;font-weight:700;color:#333;letter-spacing:1.487px;-webkit-text-stroke:0.3px;">Program Allotment Selection Information</div>
<div class="t" style="left:204.70px;top:318px;font-size:11px;font-weight:700;color:#000;letter-spacing:1.474px;-webkit-text-stroke:0.3px;">Program</div>
<div class="t" style="left:478.40px;top:318px;font-size:11px;font-weight:700;color:#000;letter-spacing:1.640px;-webkit-text-stroke:0.3px;">Award Year</div>
<div class="t" style="left:204.70px;top:337px;font-size:11px;font-weight:400;color:#000;letter-spacing:0.910px;">ACG</div>
<div class="t" style="left:478.40px;top:337px;font-size:11px;font-weight:400;color:#000;letter-spacing:0.864px;">&#x27;06-&#x27;07</div>
<div class="t" style="left:204.90px;top:365px;font-size:11px;font-weight:700;color:#333;letter-spacing:1.388px;-webkit-text-stroke:0.3px;">Program Allotments</div>
<div class="t" style="left:204.90px;top:384px;font-size:11px;font-weight:700;color:#000;letter-spacing:1.343px;-webkit-text-stroke:0.3px;">Allotment</div>
<div class="t" style="left:204.90px;top:397px;font-size:11px;font-weight:700;color:#000;letter-spacing:1.464px;-webkit-text-stroke:0.3px;">Number</div>
<div class="t" style="left:272.90px;top:384px;font-size:11px;font-weight:700;color:#000;letter-spacing:1.244px;-webkit-text-stroke:0.3px;">Priority</div>
<div class="t" style="left:328.00px;top:384px;font-size:11px;font-weight:700;color:#000;letter-spacing:1.331px;-webkit-text-stroke:0.3px;">Description</div>
<div class="t" style="left:423.30px;top:384px;font-size:11px;font-weight:700;color:#000;letter-spacing:1.381px;-webkit-text-stroke:0.3px;">Funded</div>
<div class="t" style="left:423.30px;top:397px;font-size:11px;font-weight:700;color:#000;letter-spacing:1.724px;-webkit-text-stroke:0.3px;">Amount</div>
<div class="t" style="left:519.80px;top:384px;font-size:11px;font-weight:700;color:#000;letter-spacing:1.198px;-webkit-text-stroke:0.3px;">CFDA</div>
<div class="t" style="left:561.10px;top:384px;font-size:11px;font-weight:700;color:#000;letter-spacing:1.196px;-webkit-text-stroke:0.3px;">Limitation</div>
<div class="t" style="left:656.50px;top:384px;font-size:11px;font-weight:700;color:#000;letter-spacing:1.126px;-webkit-text-stroke:0.3px;">Activity</div>
<div class="t" style="left:205.00px;top:416px;font-size:11px;font-weight:400;color:#0000cc;letter-spacing:0.000px;">1</div>
<div class="t" style="left:274.30px;top:416px;font-size:11px;font-weight:400;color:#000;letter-spacing:0.000px;">1</div>
<div class="t" style="left:328.60px;top:416px;font-size:11px;font-weight:400;color:#000;letter-spacing:0.414px;">BFY 2005</div>
<div class="t" style="left:423.30px;top:416px;font-size:11px;font-weight:400;color:#000;letter-spacing:0.920px;">$30,103,822.52</div>
<div class="t" style="left:519.80px;top:416px;font-size:11px;font-weight:400;color:#000;letter-spacing:0.982px;">375</div>
<div class="t" style="left:561.10px;top:416px;font-size:11px;font-weight:400;color:#000;letter-spacing:0.873px;">A10</div>
<div class="t" style="left:656.50px;top:416px;font-size:11px;font-weight:400;color:#000;letter-spacing:0.982px;">000</div>
<div class="t" style="left:205.00px;top:435px;font-size:11px;font-weight:400;color:#0000cc;letter-spacing:0.000px;">2</div>
<div class="t" style="left:274.30px;top:435px;font-size:11px;font-weight:400;color:#000;letter-spacing:0.000px;">2</div>
<div class="t" style="left:328.60px;top:435px;font-size:11px;font-weight:400;color:#000;letter-spacing:0.819px;">TEST 03/29/05</div>
<div class="t" style="left:423.30px;top:435px;font-size:11px;font-weight:400;color:#000;letter-spacing:0.923px;">$1,400,000.00</div>
<div class="t" style="left:519.80px;top:435px;font-size:11px;font-weight:400;color:#000;letter-spacing:0.982px;">375</div>
<div class="t" style="left:561.10px;top:435px;font-size:11px;font-weight:400;color:#000;letter-spacing:0.873px;">A10</div>
<div class="t" style="left:656.50px;top:435px;font-size:11px;font-weight:400;color:#000;letter-spacing:0.982px;">003</div>
<div class="t" style="left:205.00px;top:454px;font-size:11px;font-weight:400;color:#0000cc;letter-spacing:0.000px;">3</div>
<div class="t" style="left:274.30px;top:454px;font-size:11px;font-weight:400;color:#000;letter-spacing:0.000px;">3</div>
<div class="t" style="left:328.60px;top:454px;font-size:11px;font-weight:400;color:#000;letter-spacing:0.567px;">TEST 4.4.05</div>
<div class="t" style="left:423.30px;top:454px;font-size:11px;font-weight:400;color:#000;letter-spacing:0.895px;">$146,000.00</div>
<div class="t" style="left:519.80px;top:454px;font-size:11px;font-weight:400;color:#000;letter-spacing:0.982px;">375</div>
<div class="t" style="left:561.10px;top:454px;font-size:11px;font-weight:400;color:#000;letter-spacing:0.873px;">A10</div>
<div class="t" style="left:656.50px;top:454px;font-size:11px;font-weight:400;color:#000;letter-spacing:0.982px;">004</div>
<div class="t" style="left:211.70px;top:484px;font-size:9px;font-weight:700;color:#fff;letter-spacing:0.7px;transform:scaleX(1.0235);transform-origin:0 0;-webkit-text-stroke:0.35px;">CREATE NEW</div>
<div class="t" style="left:307.90px;top:484px;font-size:9px;font-weight:700;color:#fff;letter-spacing:0.7px;transform:scaleX(1.0074);transform-origin:0 0;-webkit-text-stroke:0.35px;">TRANSFER</div>
<div class="t" style="left:12.20px;top:513px;font-size:11px;font-weight:400;color:#e8e8e8;letter-spacing:0.455px;">Nov 19 2006 20:27 EST</div>
<div class="t" style="left:229.50px;top:514px;font-size:11px;font-weight:400;color:#e8e8e8;letter-spacing:0.858px;">Home</div>
<div class="t" style="left:273.00px;top:514px;font-size:11px;font-weight:400;color:#e8e8e8;letter-spacing:0.000px;">|</div>
<div class="t" style="left:285.40px;top:514px;font-size:11px;font-weight:400;color:#e8e8e8;letter-spacing:0.865px;">Privacy Act</div>
<div class="t" style="left:360.30px;top:514px;font-size:11px;font-weight:400;color:#e8e8e8;letter-spacing:0.000px;">|</div>
<div class="t" style="left:372.60px;top:514px;font-size:11px;font-weight:400;color:#e8e8e8;letter-spacing:0.355px;">Links</div>
<div class="t" style="left:412.60px;top:514px;font-size:11px;font-weight:400;color:#e8e8e8;letter-spacing:0.000px;">|</div>
<div class="t" style="left:424.20px;top:514px;font-size:11px;font-weight:400;color:#e8e8e8;letter-spacing:0.655px;">Contact Us</div>
<div class="t" style="left:497.40px;top:514px;font-size:11px;font-weight:400;color:#e8e8e8;letter-spacing:0.000px;">|</div>
<div class="t" style="left:509.50px;top:514px;font-size:11px;font-weight:400;color:#e8e8e8;letter-spacing:0.864px;">Today&#x27;s Update</div>
<div class="t" style="left:608.50px;top:514px;font-size:11px;font-weight:400;color:#e8e8e8;letter-spacing:0.000px;">|</div>
<div class="t" style="left:620.10px;top:514px;font-size:11px;font-weight:400;color:#e8e8e8;letter-spacing:0.532px;">Help</div>
<div class="t" style="left:656.20px;top:514px;font-size:11px;font-weight:400;color:#e8e8e8;letter-spacing:0.000px;">|</div>
<div class="t" style="left:668.50px;top:514px;font-size:11px;font-weight:400;color:#e8e8e8;letter-spacing:0.700px;">Glossary</div>
<div class="t" style="left:729.70px;top:514px;font-size:11px;font-weight:400;color:#e8e8e8;letter-spacing:0.000px;">|</div>
<div class="t" style="left:741.30px;top:514px;font-size:11px;font-weight:400;color:#e8e8e8;letter-spacing:0.580px;">Log Off</div>
<div class="t" style="left:715.00px;top:562px;font-size:11px;font-weight:400;color:#000;letter-spacing:-0.235px;">My Computer</div>
</body></html>
